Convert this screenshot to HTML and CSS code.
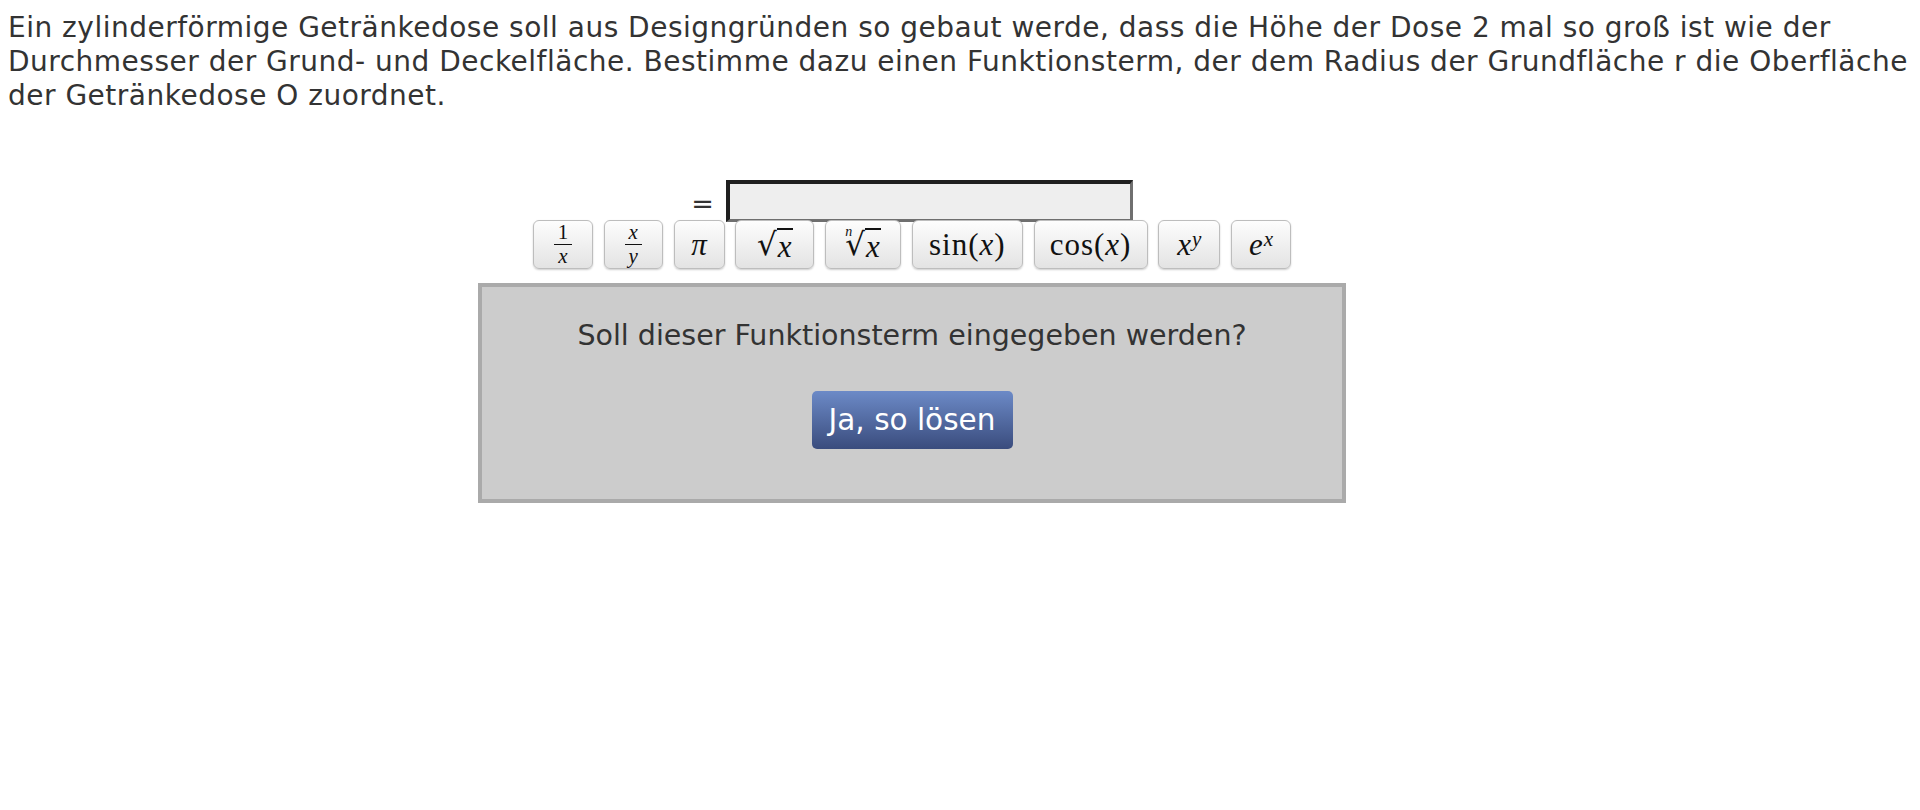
FILE: index.html
```html
<!DOCTYPE html>
<html lang="de">
<head>
<meta charset="utf-8">
<title>Funktionsterm</title>
<link rel="stylesheet" href="styles.css">
</head>
<body>
<p class="task">Ein zylinderförmige Getränkedose soll aus Designgründen so gebaut werde, dass die Höhe der Dose 2 mal so groß ist wie der Durchmesser der Grund- und Deckelfläche. Bestimme dazu einen Funktionsterm, der dem Radius der Grundfläche r die Oberfläche der Getränkedose O zuordnet.</p>

<div class="workspace">
  <div class="entry-row">
    <span class="equals">=</span>
    <div class="entry-field"></div>
  </div>

  <div class="keypad">
    <button class="key w60"><span class="frac"><span class="num">1</span><span class="den"><i>x</i></span></span></button>
    <button class="key w59"><span class="frac"><span class="num"><i>x</i></span><span class="den"><i>y</i></span></span></button>
    <button class="key w51"><i>π</i></button>
    <button class="key w79"><span class="root">√</span><span class="radicand"><i>x</i></span></button>
    <button class="key w76"><span class="nroot"><sup class="index"><i>n</i></sup><span class="root">√</span></span><span class="radicand"><i>x</i></span></button>
    <button class="key w111 fn">sin(<i>x</i>)</button>
    <button class="key w114 fn">cos(<i>x</i>)</button>
    <button class="key w62"><i>x</i><sup class="pow"><i>y</i></sup></button>
    <button class="key w60"><i>e</i><sup class="pow"><i>x</i></sup></button>
  </div>

  <div class="confirm">
    <p class="confirm-text">Soll dieser Funktionsterm eingegeben werden?</p>
    <button class="solve">Ja, so lösen</button>
  </div>
</div>
</body>
</html>
```

FILE: styles.css
```css
html, body {
  background: #ffffff;
}

body {
  margin: 8px;
  font-family: "DejaVu Sans", Verdana, sans-serif;
  color: #333333;
}

.task {
  margin: 0;
  padding-top: 3px;
  font-size: 28px;
  line-height: 34px;
  letter-spacing: 0.5px;
}

.workspace {
  width: 1808px;
  display: flex;
  flex-direction: column;
  align-items: center;
  margin-top: 67px;
}

.entry-row {
  display: flex;
  align-items: center;
  gap: 12px;
}

.equals {
  font-size: 27px;
  line-height: 1;
  color: #333;
  padding-top: 5px;
}

.entry-field {
  width: 400px;
  height: 35px;
  background: #eeeeee;
  border-style: solid;
  border-width: 4px 3px 3px 4px;
  border-color: #1f1f1f #6f6f6f #6f6f6f #1f1f1f;
}

.keypad {
  display: flex;
  gap: 10.75px;
  margin-top: -2px;
  position: relative;
  z-index: 1;
}

.key {
  height: 49px;
  padding: 0;
  border: 1px solid #bdbdbd;
  border-radius: 6px;
  background: linear-gradient(#fdfdfd, #e3e3e3);
  box-shadow: 0 1px 2px rgba(0, 0, 0, 0.2);
  font-family: "Liberation Serif", "DejaVu Serif", serif;
  font-size: 31px;
  line-height: 1;
  color: #111;
  display: flex;
  align-items: center;
  justify-content: center;
}

.key.fn {
  letter-spacing: 1px;
}

.key i {
  font-style: italic;
}

.w51 { width: 51px; }
.w59 { width: 59px; }
.w60 { width: 60px; }
.w62 { width: 62px; }
.w76 { width: 76px; }
.w79 { width: 79px; }
.w111 { width: 111px; }
.w114 { width: 114px; }

.frac {
  display: inline-flex;
  flex-direction: column;
  align-items: center;
  font-size: 21px;
  line-height: 1;
}

.frac .num {
  padding: 0 4px 1px;
  border-bottom: 1.5px solid #111;
}

.frac .den {
  padding-top: 1px;
}

.root {
  font-family: "DejaVu Serif", serif;
  font-size: 31px;
  line-height: 1;
}

.radicand {
  border-top: 2px solid #111;
  padding: 1px 1px 0;
  line-height: 1;
  margin-top: 1px;
}

.nroot {
  position: relative;
  display: inline-block;
}

.index {
  position: absolute;
  left: 0;
  top: -4px;
  font-size: 14px;
}

.pow {
  font-size: 21px;
  margin-left: 1px;
  position: relative;
  top: -5px;
}

.confirm {
  box-sizing: border-box;
  width: 868px;
  height: 220px;
  margin-top: 14px;
  background: #cccccc;
  border: 4px solid #aaaaaa;
  display: flex;
  flex-direction: column;
  align-items: center;
}

.confirm-text {
  margin: 32px 0 0;
  font-size: 28.5px;
  line-height: 34px;
  color: #333;
}

.solve {
  margin-top: 38px;
  width: 201px;
  height: 58px;
  border: none;
  border-radius: 5px;
  background: linear-gradient(#6c8ac7, #3a4c7d);
  color: #ffffff;
  font-family: "DejaVu Sans", Verdana, sans-serif;
  font-size: 29.5px;
  padding: 0;
}
```
